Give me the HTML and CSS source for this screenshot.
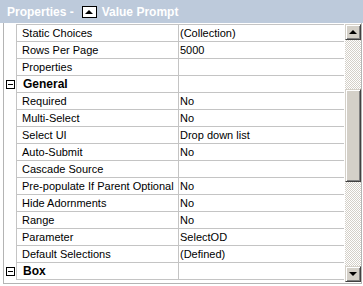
FILE: index.html
```html
<!DOCTYPE html>
<html lang="en">
<head>
  <meta charset="UTF-8" />
  <title>Properties</title>
  <link rel="stylesheet" href="styles.css">
</head>
<body>
  <div class="title">
    <span>Properties -</span>
    <span class="obj-icon"><span class="tri-up"></span></span>
    <span>Value Prompt</span>
  </div>

  <div class="panel">
    <table class="grid">
      <tr><td class="gutter"></td><td class="name">Static Choices</td><td class="value">(Collection)</td></tr>
      <tr><td class="gutter"></td><td class="name">Rows Per Page</td><td class="value">5000</td></tr>
      <tr><td class="gutter"></td><td class="name">Properties</td><td class="value"></td></tr>
      <tr class="cat"><td class="gutter"><span class="toggle"></span></td><td class="name">General</td><td class="value"></td></tr>
      <tr><td class="gutter"></td><td class="name">Required</td><td class="value">No</td></tr>
      <tr><td class="gutter"></td><td class="name">Multi-Select</td><td class="value">No</td></tr>
      <tr><td class="gutter"></td><td class="name">Select UI</td><td class="value">Drop down list</td></tr>
      <tr><td class="gutter"></td><td class="name">Auto-Submit</td><td class="value">No</td></tr>
      <tr><td class="gutter"></td><td class="name">Cascade Source</td><td class="value"></td></tr>
      <tr><td class="gutter"></td><td class="name">Pre-populate If Parent Optional</td><td class="value">No</td></tr>
      <tr><td class="gutter"></td><td class="name">Hide Adornments</td><td class="value">No</td></tr>
      <tr><td class="gutter"></td><td class="name">Range</td><td class="value">No</td></tr>
      <tr><td class="gutter"></td><td class="name">Parameter</td><td class="value">SelectOD</td></tr>
      <tr><td class="gutter"></td><td class="name">Default Selections</td><td class="value">(Defined)</td></tr>
      <tr class="cat"><td class="gutter"><span class="toggle"></span></td><td class="name">Box</td><td class="value"></td></tr>
    </table>

    <div class="scrollbar">
      <div class="sb-btn"><span class="arrow-up"></span></div>
      <div class="sb-track">
        <div class="sb-space top"></div>
        <div class="sb-thumb"></div>
      </div>
      <div class="sb-btn"><span class="arrow-down"></span></div>
    </div>
  </div>
</body>
</html>
```

FILE: styles.css
```css
body {
  margin: 0;
  width: 363px;
  height: 286px;
  overflow: hidden;
  background: #ffffff;
  font-family: "Liberation Sans", Arial, sans-serif;
  font-size: 11px;
  color: #000;
}

.title {
  height: 23px;
  background: #bdcadb;
  color: #ffffff;
  font-weight: bold;
  font-size: 12px;
  display: flex;
  align-items: center;
  padding-left: 7px;
  box-sizing: border-box;
}

.obj-icon {
  width: 13px;
  height: 10px;
  margin: 0 5px 0 8px;
  background: #fff;
  border: 1px solid #000;
  display: flex;
  align-items: center;
  justify-content: center;
}

.tri-up {
  width: 0;
  height: 0;
  border-left: 4px solid transparent;
  border-right: 4px solid transparent;
  border-bottom: 4px solid #000;
}

.panel {
  display: flex;
  margin-left: 3px;
  width: 359px;
  height: 261px;
  border: 1px solid #b4b4b4;
  border-top: none;
  box-sizing: border-box;
}

.grid {
  border-collapse: collapse;
  table-layout: fixed;
  width: 340px;
  align-self: flex-start;
  margin-top: 1px;
}

.grid td {
  height: 16px;
  padding: 0;
  border-top: 1px solid #c4c4c4;
  border-bottom: 1px solid #c4c4c4;
  white-space: nowrap;
  overflow: hidden;
}

.grid .gutter {
  width: 12px;
  border-top: none;
  border-bottom: none;
  border-right: 1px solid #c4c4c4;
  position: relative;
}

.grid .name {
  width: 156px;
  padding-left: 5px;
  border-right: 1px solid #c4c4c4;
}

.grid .value {
  padding-left: 1px;
}

.cat .name {
  font-weight: bold;
  font-size: 12px;
  padding-left: 6px;
}

.toggle {
  display: block;
  width: 7px;
  height: 7px;
  margin-left: 2px;
  border: 1px solid #000;
  background: #fff;
  position: relative;
}

.toggle::after {
  content: "";
  position: absolute;
  left: 1px;
  top: 3px;
  width: 5px;
  height: 1px;
  background: #000;
}

.scrollbar {
  width: 16px;
  margin-left: 1px;
  margin-top: 1px;
  height: 258px;
  display: flex;
  flex-direction: column;
}

.sb-btn {
  height: 16px;
  box-sizing: border-box;
  background: #d4d0c8;
  border: 1px solid;
  border-color: #d4d0c8 #404040 #404040 #d4d0c8;
  box-shadow: inset 1px 1px #fff, inset -1px -1px #808080;
  display: flex;
  align-items: center;
  justify-content: center;
}

.arrow-up {
  border-left: 4px solid transparent;
  border-right: 4px solid transparent;
  border-bottom: 4px solid #000;
}

.arrow-down {
  border-left: 4px solid transparent;
  border-right: 4px solid transparent;
  border-top: 4px solid #000;
}

.sb-track {
  flex: 1;
  background: repeating-conic-gradient(#d4d0c8 0 25%, #ffffff 0 50%) 0 0 / 2px 2px;
  display: flex;
  flex-direction: column;
}

.sb-space.top {
  height: 49px;
}

.sb-thumb {
  height: 93px;
  box-sizing: border-box;
  background: #d4d0c8;
  border: 1px solid;
  border-color: #d4d0c8 #404040 #404040 #d4d0c8;
  box-shadow: inset 1px 1px #fff, inset -1px -1px #808080;
}
```
